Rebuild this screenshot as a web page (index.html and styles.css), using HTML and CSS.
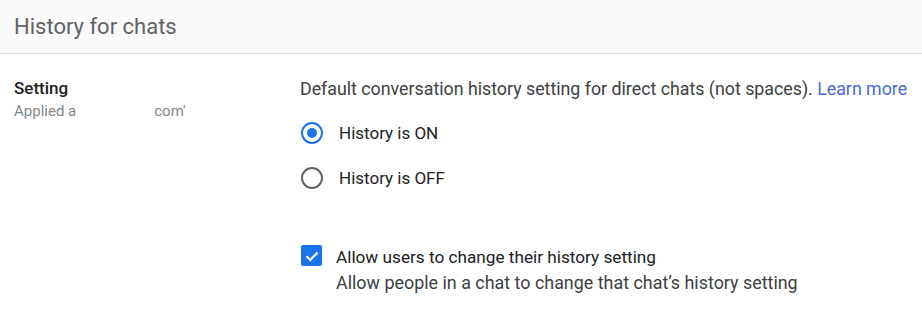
FILE: index.html
```html
<!DOCTYPE html>
<html>
<head>
<meta charset="utf-8">
<link rel="stylesheet" href="styles.css">
</head>
<body>
<div class="header"><h1 class="title">History for chats</h1></div>
<div class="row">
  <div class="left">
    <div class="label">Setting</div>
    <div class="sub">Applied a<span class="gap"></span>com'</div>
  </div>
  <div class="right">
    <div class="desc">Default conversation history setting for direct chats (not spaces). <a class="link" href="#">Learn more</a></div>
    <div class="radios">
      <div class="radio-row"><span class="radio on"><span class="dot"></span></span><span class="rlabel">History is ON</span></div>
      <div class="radio-row"><span class="radio"></span><span class="rlabel">History is OFF</span></div>
    </div>
    <div class="check-row">
      <span class="check"><svg width="16" height="16" viewBox="0 0 16 16"><path d="M2.5 8.3 L6.2 12 L13.6 4.4" fill="none" stroke="#fff" stroke-width="2.2"/></svg></span>
      <div class="ctext">
        <div class="cline first">Allow users to change their history setting</div>
        <div class="cline second">Allow people in a chat to change that chat’s history setting</div>
      </div>
    </div>
  </div>
</div>
</body>
</html>
```
FILE: styles.css
```css
* { box-sizing: border-box; }
body { margin: 0; background: #fff; font-family: Roboto, "Noto Sans", sans-serif; color: #3c4043; }
.header { height: 54px; background: #fafafa; border-bottom: 1px solid #e0e0e0; display: flex; align-items: center; padding-left: 14px; }
.title { margin: 0; font-size: 22px; font-weight: 400; color: #5f6368; padding-bottom: 1px; }
.row { display: flex; }
.left { width: 300px; padding: 24px 0 0 14px; }
.label { font-size: 17px; font-weight: 500; color: #202124; line-height: 20px; }
.sub { font-size: 15px; color: #80868b; line-height: 20px; margin-top: 3px; }
.gap { display: inline-block; width: 78px; }
.right { padding-top: 24px; }
.desc { font-size: 17.8px; line-height: 22px; color: #3c4043; white-space: nowrap; }
.link { color: #4a68d8; text-decoration: none; }
.radios { margin-top: 22px; display: flex; flex-direction: column; gap: 23px; }
.radio-row { display: flex; align-items: center; height: 22px; }
.radio { width: 22px; height: 22px; border: 2px solid #5f6368; border-radius: 50%; margin-left: 1px; display: flex; align-items: center; justify-content: center; }
.radio.on { border-color: #1a73e8; }
.dot { width: 10px; height: 10px; border-radius: 50%; background: #1a73e8; }
.rlabel { margin-left: 16px; font-size: 17px; color: #202124; }
.check-row { display: flex; margin-top: 55px; }
.check { width: 21px; height: 21px; background: #1a73e8; border-radius: 2px; margin-left: 1px; margin-top: 1px; display: flex; align-items: center; justify-content: center; }
.ctext { margin-left: 14px; }
.cline { line-height: 26px; white-space: nowrap; }
.first { font-size: 17.2px; color: #202124; }
.second { font-size: 17.9px; color: #3c4043; }
```
